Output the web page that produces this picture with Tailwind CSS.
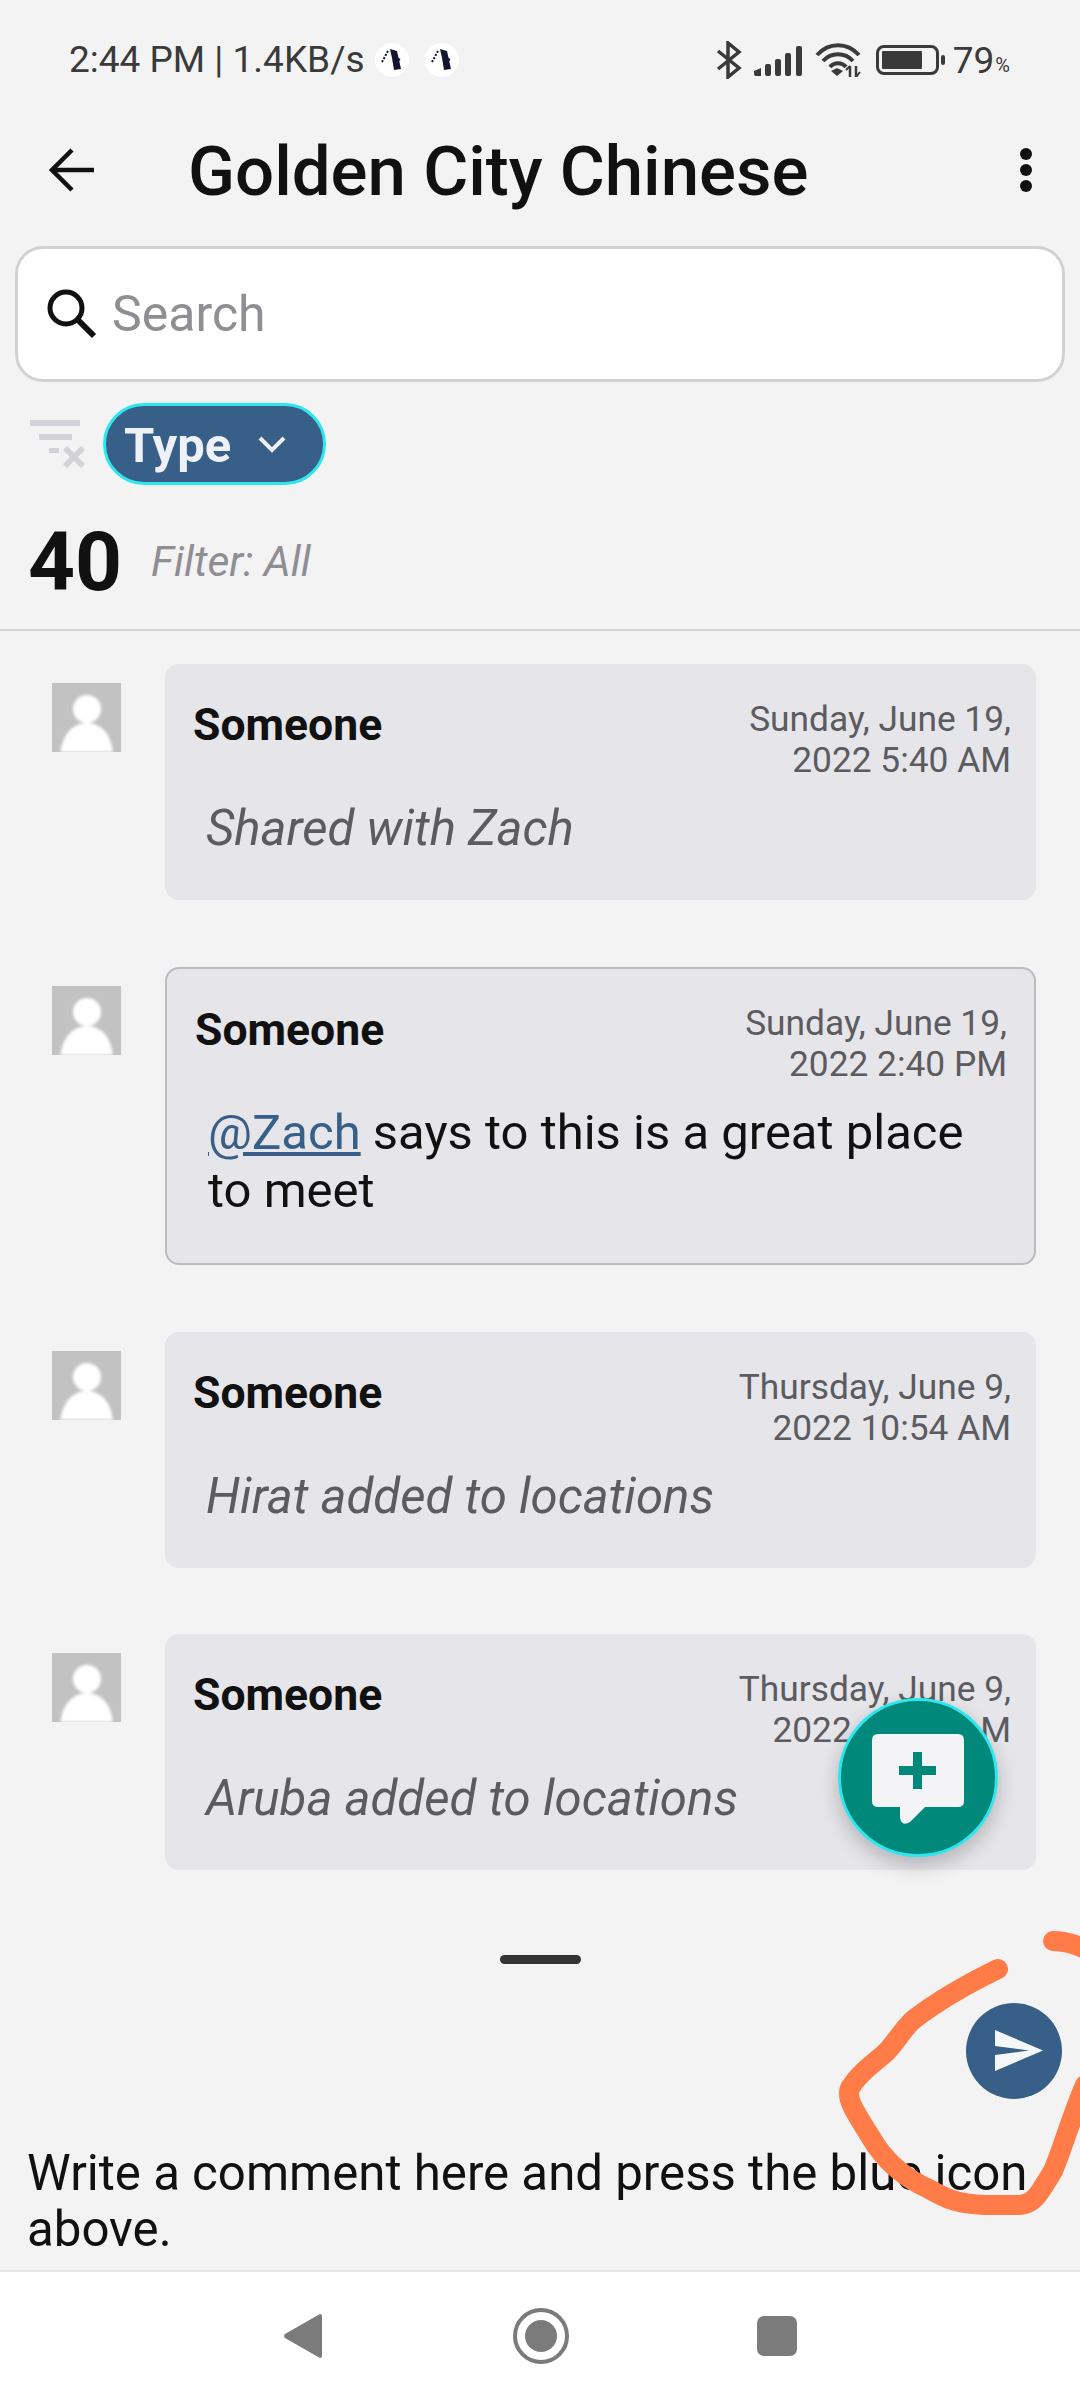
<!DOCTYPE html>
<html lang="en">
<head>
  <meta charset="UTF-8" />
  <meta name="viewport" content="width=device-width, initial-scale=1.0" />
  <title>Golden City Chinese</title>
  <script src="https://cdn.jsdelivr.net/npm/@tailwindcss/browser@4"></script>
</head>
<body class="bg-[#f3f3f3]">
<div class="relative w-[1080px] h-[2400px] overflow-hidden flex flex-col bg-[#f3f3f3] font-[Roboto,sans-serif] text-[#111111]">

  <!-- Status bar -->
  <div class="h-[120px] shrink-0 flex items-center pl-[69px] pr-[70px] text-[#3a3a3a]">
    <span class="text-[37px]">2:44 PM | 1.4KB/s</span>
    <div class="ml-[10px] w-[34px] h-[34px] rounded-full bg-white">
      <svg width="34" height="34" viewBox="0 0 34 34"><path d="M15 6 L22 8 L26 26 L19 27 L17 15Z" fill="#14142e"/><path d="M7 19 L13 8" stroke="#14142e" stroke-width="2" stroke-dasharray="2 1.5" fill="none"/><path d="M21 15 L25 17" stroke="#14142e" stroke-width="2" fill="none"/></svg>
    </div>
    <div class="ml-[16px] w-[34px] h-[34px] rounded-full bg-white">
      <svg width="34" height="34" viewBox="0 0 34 34"><path d="M15 6 L22 8 L26 26 L19 27 L17 15Z" fill="#14142e"/><path d="M7 19 L13 8" stroke="#14142e" stroke-width="2" stroke-dasharray="2 1.5" fill="none"/><path d="M21 15 L25 17" stroke="#14142e" stroke-width="2" fill="none"/></svg>
    </div>
    <div class="ml-auto flex items-center">
      <svg width="26" height="38" viewBox="0 0 26 38" fill="none" stroke="#3a3a3a" stroke-width="3.5"><path d="M2 10 L23 27 L12 36 L12 2 L23 11 L2 28"/></svg>
      <svg class="ml-[12px]" width="48" height="31" viewBox="0 0 48 31" fill="#3a3a3a"><path d="M0 26 L7 23 V31 H2 Q0 31 0 29Z"/><rect x="11" y="19" width="6" height="12" rx="2"/><rect x="21" y="14" width="6" height="17" rx="2"/><rect x="31" y="8" width="6" height="23" rx="2"/><rect x="42" y="1" width="6" height="30" rx="2"/></svg>
      <svg class="ml-[13px]" width="46" height="34" viewBox="0 0 46 34" fill="none" stroke="#3a3a3a" stroke-width="4"><path d="M2 12 C14 -1 32 -1 44 12"/><path d="M8 18 C16 9 30 9 38 18"/><path d="M15 24 C19 19 27 19 31 24" /><path d="M16 28 L22 25 L28 28 L22 33Z" fill="#3a3a3a" stroke="none"/><path d="M35 23 V34 M41 23 V34" stroke-width="2.5"/><path d="M31 27 L35 23 M41 34 L45 29" stroke-width="2"/></svg>
      <div class="ml-[15px] w-[63px] h-[30px] rounded-[8px] border-[3px] border-[#3a3a3a] p-[3px]"><div class="w-[40px] h-full rounded-[1px] bg-[#3a3a3a]"></div></div>
      <div class="ml-[2px] w-[4px] h-[10px] rounded-full bg-[#3a3a3a]"></div>
      <span class="ml-[8px] text-[37px] leading-none">79</span><span class="text-[20px] mt-[10px] ml-[1px] leading-none">%</span>
    </div>
  </div>

  <!-- Header -->
  <div class="h-[100px] shrink-0 flex items-center pl-[48px] pr-[48px]">
    <svg width="48" height="44" viewBox="0 0 48 44" fill="none" stroke="#111111" stroke-width="4.5"><path d="M46 22 H5"/><path d="M24 2 L4 22 L24 42"/></svg>
    <h1 class="ml-[92px] mt-[2px] text-[69px] font-medium leading-none">Golden City Chinese</h1>
    <div class="ml-auto flex flex-col gap-[4px]">
      <div class="w-[12px] h-[12px] rounded-full bg-[#111111]"></div>
      <div class="w-[12px] h-[12px] rounded-full bg-[#111111]"></div>
      <div class="w-[12px] h-[12px] rounded-full bg-[#111111]"></div>
    </div>
  </div>

  <!-- Search -->
  <div class="mt-[26px] mx-[15px] h-[136px] shrink-0 flex items-center rounded-[28px] bg-white border-[3px] border-[#d2d2d6] pl-[29px]">
    <svg width="50" height="50" viewBox="0 0 50 50" fill="none" stroke="#111111" stroke-width="5"><circle cx="19" cy="19" r="16"/><path d="M31 31 L47 47" stroke-width="6"/></svg>
    <span class="ml-[15px] text-[50px] text-[#8e8e93]">Search</span>
  </div>

  <!-- Filter chips -->
  <div class="mt-[21px] h-[82px] shrink-0 flex items-center pl-[30px]">
    <svg width="56" height="48" viewBox="0 0 56 48" fill="#d2d2d8"><rect x="0" y="0" width="50" height="6"/><rect x="9" y="14" width="33" height="6"/><rect x="19" y="28" width="10" height="5"/><path d="M33 30 L37 26 L44 33 L51 26 L55 30 L48 37 L55 44 L51 48 L44 41 L37 48 L33 44 L40 37Z"/></svg>
    <div class="ml-[17px] w-[223px] h-[82px] flex items-center rounded-full bg-[#385f87] border-[3px] border-[#2ee6ee] pl-[18px] text-[#eef2f7]">
      <span class="text-[49px] font-bold leading-none mt-[2px]">Type</span>
      <svg class="ml-[27px]" width="28" height="18" viewBox="0 0 28 18" fill="none" stroke="#eef2f7" stroke-width="4"><path d="M2 3 L14 15 L26 3"/></svg>
    </div>
  </div>

  <!-- Count -->
  <div class="h-[146px] shrink-0 flex items-center pl-[28px] pt-[9px] border-b-2 border-[#d4d4d8]">
    <span class="text-[82px] font-bold leading-none">40</span>
    <span class="ml-[29px] text-[42.5px] italic text-[#8e8e93]">Filter: All</span>
  </div>

  <!-- Activity list -->
  <div class="pt-[33px] pl-[52px] flex flex-col shrink-0">
    <div class="flex items-start">
      <div class="mt-[19px] w-[69px] h-[69px] shrink-0 bg-[#c2c2c2] overflow-hidden">
        <svg class="blur-[1.5px]" width="69" height="69" viewBox="0 0 69 69" fill="#ffffff"><circle cx="35" cy="26" r="14"/><path d="M8 72 C10 50 22 40 35 40 C48 40 60 50 61 72Z"/></svg>
      </div>
      <div class="ml-[44px] w-[871px] h-[236px] rounded-[14px] bg-[#e5e5ea] pt-[33px] pl-[28px] pr-[25px]">
        <div class="flex justify-between items-start">
          <span class="mt-[3px] text-[44.5px] font-bold leading-[50px]">Someone</span>
          <span class="mt-[2px] text-right text-[35.3px] leading-[41px] text-[#5b5b60]">Sunday, June 19,<br />2022 5:40 AM</span>
        </div>
        <p class="mt-[19px] ml-[13px] text-[49.2px] italic leading-[56px] text-[#5b5b60]">Shared with Zach</p>
      </div>
    </div>

    <div class="mt-[67px] flex items-start">
      <div class="mt-[19px] w-[69px] h-[69px] shrink-0 bg-[#c2c2c2] overflow-hidden">
        <svg class="blur-[1.5px]" width="69" height="69" viewBox="0 0 69 69" fill="#ffffff"><circle cx="35" cy="26" r="14"/><path d="M8 72 C10 50 22 40 35 40 C48 40 60 50 61 72Z"/></svg>
      </div>
      <div class="ml-[44px] w-[871px] h-[298px] rounded-[14px] bg-[#e5e5ea] border-2 border-[#bcbcc0] pt-[32px] pl-[28px] pr-[27px]">
        <div class="flex justify-between items-start">
          <span class="mt-[4px] text-[44.5px] font-bold leading-[50px]">Someone</span>
          <span class="mt-[2px] text-right text-[35.3px] leading-[41px] text-[#5b5b60]">Sunday, June 19,<br />2022 2:40 PM</span>
        </div>
        <p class="mt-[19px] ml-[13px] text-[49px] leading-[58px]"><span class="text-[#385f87] underline">@Zach</span> says to this is a great place to meet</p>
      </div>
    </div>

    <div class="mt-[67px] flex items-start">
      <div class="mt-[19px] w-[69px] h-[69px] shrink-0 bg-[#c2c2c2] overflow-hidden">
        <svg class="blur-[1.5px]" width="69" height="69" viewBox="0 0 69 69" fill="#ffffff"><circle cx="35" cy="26" r="14"/><path d="M8 72 C10 50 22 40 35 40 C48 40 60 50 61 72Z"/></svg>
      </div>
      <div class="ml-[44px] w-[871px] h-[236px] rounded-[14px] bg-[#e5e5ea] pt-[33px] pl-[28px] pr-[25px]">
        <div class="flex justify-between items-start">
          <span class="mt-[3px] text-[44.5px] font-bold leading-[50px]">Someone</span>
          <span class="mt-[2px] text-right text-[35.3px] leading-[41px] text-[#5b5b60]">Thursday, June 9,<br />2022 10:54 AM</span>
        </div>
        <p class="mt-[19px] ml-[13px] text-[49.2px] italic leading-[56px] text-[#5b5b60]">Hirat added to locations</p>
      </div>
    </div>

    <div class="mt-[66px] flex items-start">
      <div class="mt-[19px] w-[69px] h-[69px] shrink-0 bg-[#c2c2c2] overflow-hidden">
        <svg class="blur-[1.5px]" width="69" height="69" viewBox="0 0 69 69" fill="#ffffff"><circle cx="35" cy="26" r="14"/><path d="M8 72 C10 50 22 40 35 40 C48 40 60 50 61 72Z"/></svg>
      </div>
      <div class="ml-[44px] w-[871px] h-[236px] rounded-[14px] bg-[#e5e5ea] pt-[33px] pl-[28px] pr-[25px]">
        <div class="flex justify-between items-start">
          <span class="mt-[3px] text-[44.5px] font-bold leading-[50px]">Someone</span>
          <span class="mt-[2px] text-right text-[35.3px] leading-[41px] text-[#5b5b60]">Thursday, June 9,<br />2022 10:54 AM</span>
        </div>
        <p class="mt-[19px] ml-[13px] text-[49.2px] italic leading-[56px] text-[#5b5b60]">Aruba added to locations</p>
      </div>
    </div>
  </div>

  <!-- Drag handle -->
  <div class="mt-[85px] mx-auto w-[81px] h-[9px] rounded-full bg-[#333333] shrink-0"></div>

  <!-- Send -->
  <div class="mt-[39px] pr-[18px] flex justify-end shrink-0">
    <div class="w-[96px] h-[96px] rounded-full bg-[#385f87] flex items-center justify-center">
      <svg class="ml-[9px]" width="50" height="42" viewBox="0 0 50 42" fill="#f4f6f8"><path d="M1 0 L49 20.5 L1 41 L1 25 L35 20.5 L1 16Z"/></svg>
    </div>
  </div>

  <!-- Comment -->
  <p class="mt-[46px] px-[27px] text-[49.2px] leading-[56px] shrink-0">Write a comment here and press the blue icon above.</p>

  <!-- Nav bar -->
  <div class="mt-auto h-[130px] shrink-0 bg-white border-t-2 border-[#e6e6e6] flex items-center justify-center">
    <svg width="40" height="46" viewBox="0 0 40 46" fill="#7b7b7b"><path d="M37 1 Q39 1 39 3 V43 Q39 45 37 45 L2 25 Q0 23 2 21Z"/></svg>
    <svg class="ml-[190px]" width="56" height="56" viewBox="0 0 56 56"><circle cx="28" cy="28" r="26" fill="none" stroke="#7b7b7b" stroke-width="4"/><circle cx="28" cy="28" r="16" fill="#7b7b7b"/></svg>
    <div class="ml-[188px] w-[40px] h-[40px] rounded-[7px] bg-[#7b7b7b]"></div>
  </div>

  <!-- Floating add comment button -->
  <div class="absolute left-[838px] top-[1698px] w-[160px] h-[159px] rounded-full bg-[#00897b] border-[3px] border-[#2ee6ee] shadow-[0_8px_20px_rgba(0,0,0,0.22)] flex items-center justify-center">
    <svg class="mt-[4px]" width="92" height="92" viewBox="0 0 92 92"><path d="M6 0 H86 Q92 0 92 6 V67 Q92 73 86 73 H53 L38 88 Q30 93 28 84 V73 H6 Q0 73 0 67 V6 Q0 0 6 0Z" fill="#f4f4f6"/><path d="M41 18 H50 V32 H64 V41 H50 V55 H41 V41 H27 V32 H41Z" fill="#00897b"/></svg>
  </div>

  <!-- Hand drawn annotation -->
  <svg class="absolute left-0 top-0 pointer-events-none" width="1080" height="2400" viewBox="0 0 1080 2400" fill="none" stroke="#ff7b47" stroke-width="20" stroke-linecap="round" stroke-linejoin="round">
    <path d="M998 1969 C965 1985 935 2003 913 2020 C900 2032 895 2045 883 2055 C870 2066 858 2075 850 2088 C846 2098 852 2108 877 2147 C890 2165 905 2178 927 2188 C945 2198 955 2204 985 2205 L1020 2205 C1035 2204 1040 2192 1053 2171 C1062 2150 1072 2115 1085 2085"/>
    <path d="M1053 1941 C1065 1941 1075 1944 1088 1950"/>
  </svg>
</div>
</body>
</html>
